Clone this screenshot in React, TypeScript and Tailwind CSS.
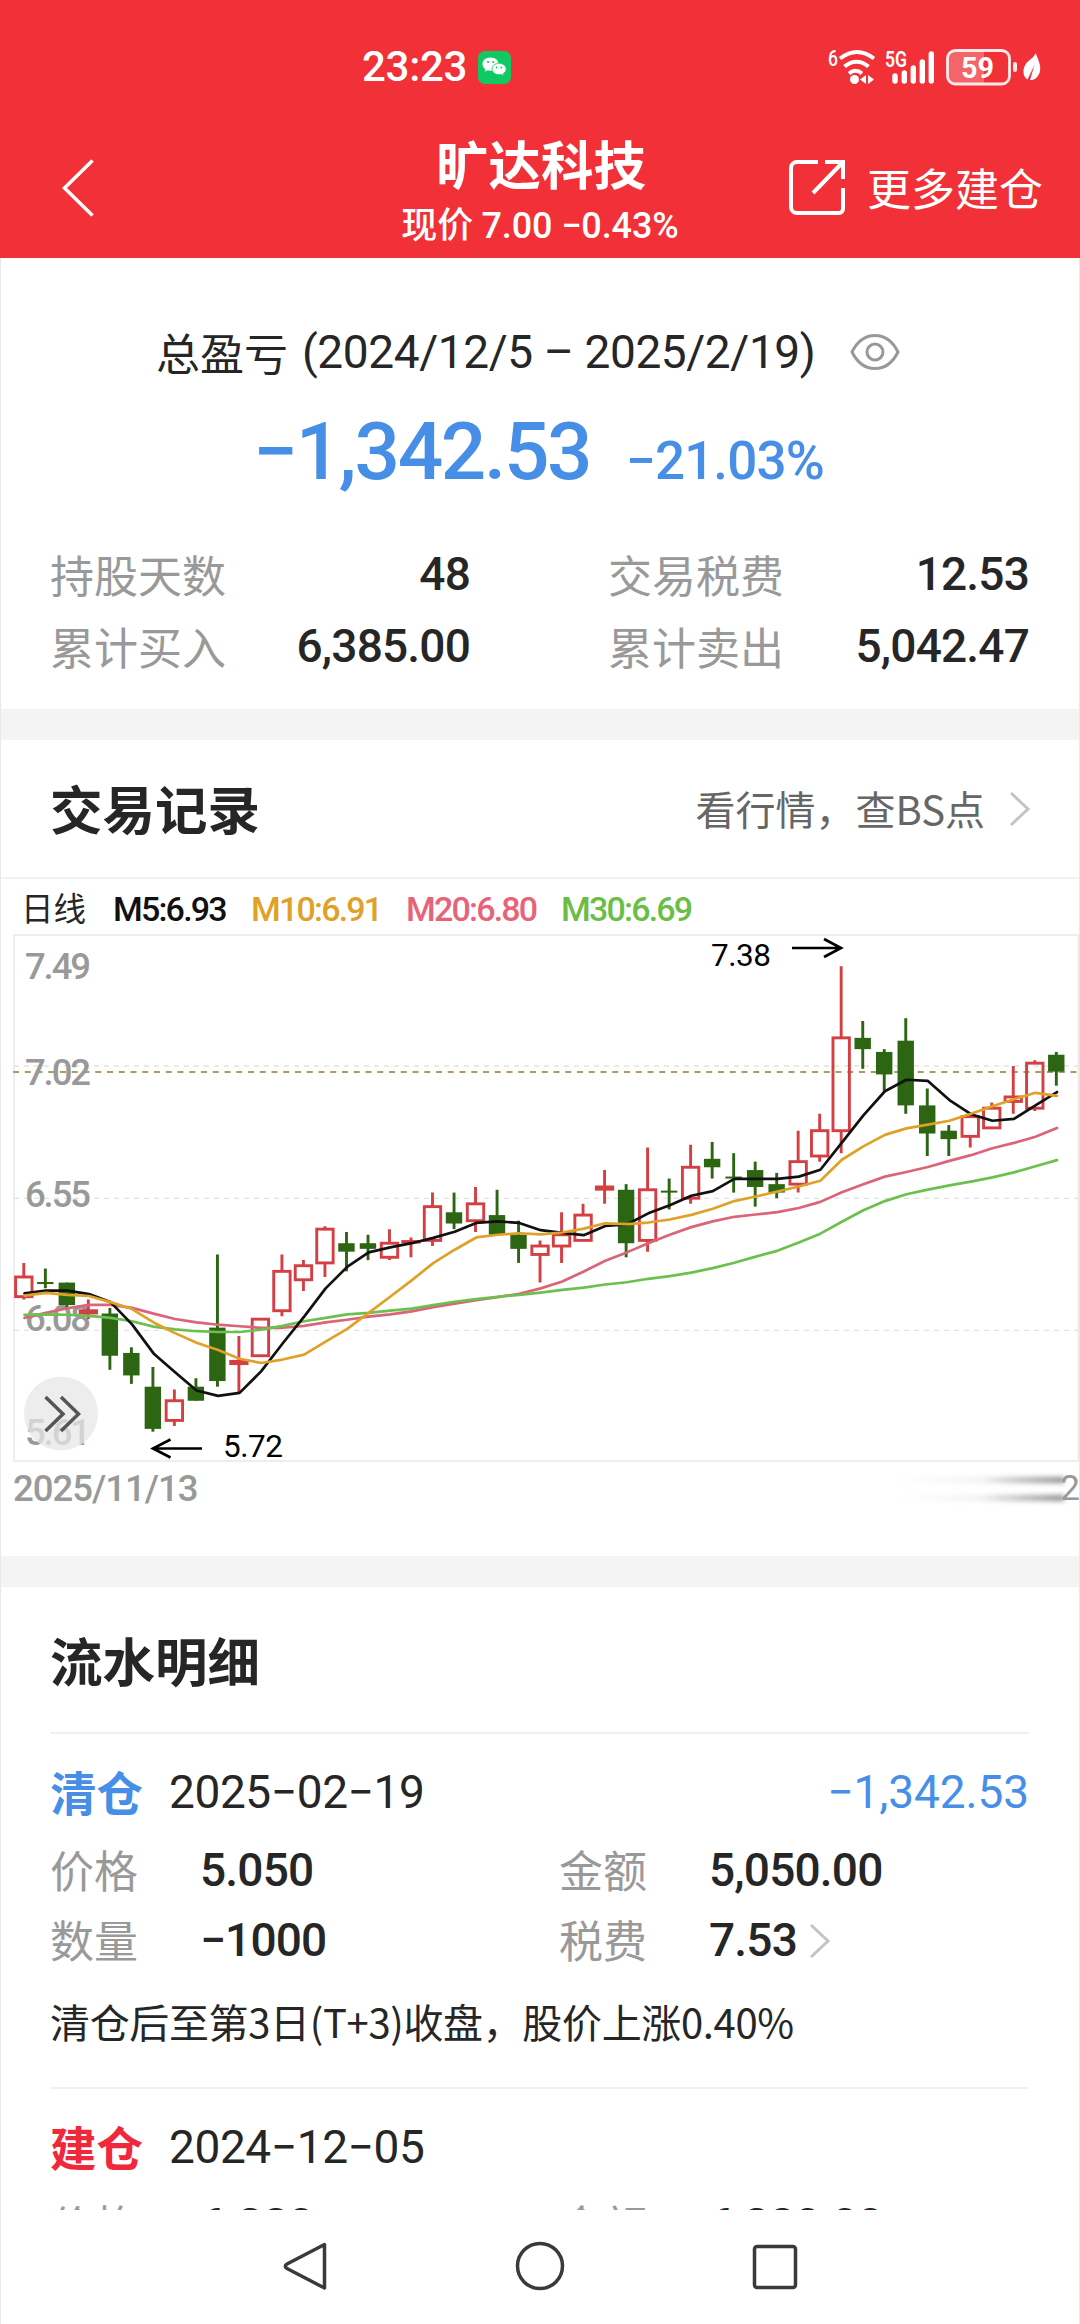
import React from 'react';

type Candle = [kind: 'up' | 'down', high: number, top: number, bottom: number, low: number];

const CANDLES: Candle[] = [
  ['up', 6.32, 6.27, 6.2, 6.19],
  ['down', 6.3, 6.252, 6.25, 6.23],
  ['down', 6.25, 6.25, 6.17, 6.16],
  ['up', 6.19, 6.15, 6.142, 6.12],
  ['down', 6.16, 6.14, 5.99, 5.94],
  ['down', 6.02, 6.0, 5.92, 5.89],
  ['down', 5.95, 5.88, 5.73, 5.72],
  ['up', 5.87, 5.83, 5.76, 5.74],
  ['down', 5.91, 5.88, 5.83, 5.83],
  ['down', 6.35, 6.09, 5.9, 5.88],
  ['up', 6.06, 5.97, 5.962, 5.86],
  ['up', 6.12, 6.12, 5.99, 5.99],
  ['up', 6.35, 6.29, 6.15, 6.13],
  ['up', 6.33, 6.31, 6.26, 6.22],
  ['up', 6.45, 6.44, 6.32, 6.27],
  ['down', 6.43, 6.39, 6.36, 6.29],
  ['down', 6.42, 6.39, 6.37, 6.33],
  ['up', 6.44, 6.39, 6.34, 6.33],
  ['up', 6.41, 6.396, 6.394, 6.34],
  ['up', 6.57, 6.52, 6.4, 6.38],
  ['down', 6.57, 6.5, 6.46, 6.44],
  ['up', 6.59, 6.53, 6.47, 6.43],
  ['down', 6.58, 6.49, 6.42, 6.42],
  ['down', 6.47, 6.42, 6.37, 6.32],
  ['up', 6.4, 6.38, 6.35, 6.25],
  ['up', 6.5, 6.42, 6.38, 6.32],
  ['up', 6.53, 6.49, 6.4, 6.4],
  ['up', 6.65, 6.59, 6.582, 6.53],
  ['down', 6.6, 6.58, 6.39, 6.34],
  ['up', 6.73, 6.58, 6.4, 6.36],
  ['down', 6.62, 6.577, 6.575, 6.51],
  ['up', 6.74, 6.66, 6.55, 6.53],
  ['down', 6.75, 6.69, 6.66, 6.62],
  ['down', 6.71, 6.627, 6.625, 6.57],
  ['down', 6.68, 6.65, 6.59, 6.52],
  ['down', 6.64, 6.6, 6.57, 6.55],
  ['up', 6.79, 6.68, 6.6, 6.57],
  ['up', 6.85, 6.79, 6.7, 6.68],
  ['up', 7.375, 7.12, 6.79, 6.71],
  ['down', 7.18, 7.12, 7.08, 7.01],
  ['down', 7.08, 7.07, 6.99, 6.93],
  ['down', 7.19, 7.11, 6.88, 6.85],
  ['down', 6.94, 6.88, 6.78, 6.7],
  ['down', 6.81, 6.79, 6.76, 6.7],
  ['up', 6.85, 6.84, 6.77, 6.73],
  ['up', 6.89, 6.87, 6.8, 6.8],
  ['up', 7.02, 6.91, 6.894, 6.85],
  ['up', 7.04, 7.03, 6.87, 6.86],
  ['down', 7.07, 7.06, 7.0, 6.95],
];

// moving averages, in steps of 1/735 yuan down from 7.503
const AVERAGES = [
  {
    color: '#dc6478',
    steps: [1013, 1000, 988, 979, 979, 987, 1002, 1016, 1025, 1031, 1035, 1039, 1039, 1034, 1025, 1018, 1010, 1004, 996, 985, 976, 967, 959, 950, 936, 918, 892, 864, 842, 818, 796, 776, 761, 749, 743, 737, 726, 710, 685, 664, 644, 632, 619, 603, 588, 570, 556, 540, 517],
  },
  {
    color: '#6cc04f',
    steps: [1005, 1004, 1005, 1008, 1013, 1022, 1036, 1043, 1048, 1050, 1050, 1044, 1034, 1022, 1013, 1004, 1000, 994, 989, 980, 971, 964, 958, 953, 947, 940, 934, 926, 920, 911, 904, 895, 883, 869, 853, 838, 816, 793, 762, 732, 708, 690, 678, 667, 657, 646, 633, 617, 601],
  },
  {
    color: '#111111',
    steps: [949, 942, 942, 951, 972, 1030, 1106, 1155, 1203, 1217, 1209, 1153, 1080, 1010, 936, 880, 842, 829, 818, 804, 788, 765, 761, 765, 784, 791, 797, 773, 769, 740, 719, 694, 682, 650, 650, 650, 644, 626, 555, 484, 421, 391, 394, 444, 481, 498, 493, 458, 423],
  },
  {
    color: '#dfa127',
    steps: [955, 948, 953, 956, 972, 990, 1025, 1053, 1078, 1097, 1120, 1131, 1122, 1109, 1075, 1042, 1000, 958, 915, 870, 835, 803, 796, 792, 795, 790, 780, 766, 768, 764, 756, 744, 728, 708, 696, 683, 670, 655, 600, 565, 535, 518, 508, 498, 480, 460, 442, 425, 433],
  },
];

const xOf = (i: number) => 23.8 + i * 21.51;
const yOf = (price: number) => 136 + (7.02 - price) * 281.3;

const CJK = "font-['Noto_Sans_CJK_SC',sans-serif]";

const StatusIcons: React.FC = () => (
  <svg width="230" height="44" viewBox="820 44 230 44" fill="none" className="shrink-0">
    <text x="828" y="65" fill="#fff" fontSize="22" fontWeight="500" textLength="10" lengthAdjust="spacingAndGlyphs">6</text>
    <g stroke="#fff" strokeWidth="4">
      <path d="M840 57.5 Q857 44.5 874 57.5" />
      <path d="M844.5 65.5 Q856.5 56 868.5 65.5" />
      <path d="M849 72.5 Q855.500 67 862 72.5" />
    </g>
    <circle cx="854.5" cy="78.500" r="4.500" fill="#fff" />
    <path d="M866 74 v9 l-6 -4.500z M868 74 v9 l6 -4.500z" fill="#fff" />
    <text x="885" y="66" fill="#fff" fontSize="22" fontWeight="600" textLength="22" lengthAdjust="spacingAndGlyphs">5G</text>
    <g stroke="#fff" strokeWidth="5.4" strokeLinecap="round">
      <path d="M895 75v5M904.300 72v8M913.300 67v13M922.300 61v19M931.300 53v27" />
    </g>
    <rect x="947.500" y="49.500" width="62" height="33.500" rx="8" stroke="#fff" strokeOpacity=".9" strokeWidth="2.800" />
    <path d="M955 50.500h29v31.500h-29a6.500 6.500 0 0 1-6.500-6.500v-18.500a6.500 6.500 0 0 1 6.500-6.500z" fill="#fff" fillOpacity=".25" />
    <text x="961" y="77" fill="#fff" fontSize="30" fontWeight="700" textLength="33" lengthAdjust="spacingAndGlyphs">59</text>
    <rect x="1013" y="61" width="4" height="10" rx="2" fill="#fff" fillOpacity=".9" />
    <path d="M1035.500 52C1039 60 1041 65 1040 70C1039 76 1034 79.500 1030 79L1034.500 64L1027.500 78.500C1022 75 1022.500 67 1026.500 62C1029.500 58.500 1034 57 1035.500 52z" fill="#fff" />
  </svg>
);

const WechatIcon: React.FC = () => (
  <svg width="33" height="33" viewBox="0 0 33 33">
    <rect width="33" height="33" rx="7" fill="#0fca63" />
    <path d="M12.500 6.500c-4.600 0-8 2.800-8 6.500 0 2.200 1.100 4 2.900 5.200l-.6 2.500 2.800-1.400c.9.200 1.900.4 2.900.4 4.600 0 8-3 8-6.700s-3.400-6.500-8-6.500z" fill="#fff" />
    <path d="M21 12.300c-4 0-7 2.500-7 5.700s3 5.700 7 5.700c.9 0 1.700-.1 2.500-.3l2.400 1.300-.5-2.300c1.700-1 2.800-2.600 2.800-4.400 0-3.200-3.200-5.700-7.200-5.700z" fill="#fff" stroke="#0fca63" strokeWidth=".8" />
    <g fill="#0fca63">
      <circle cx="10" cy="11" r="1.100" />
      <circle cx="15.300" cy="11" r="1.100" />
      <circle cx="18.700" cy="16.500" r=".9" />
      <circle cx="23.300" cy="16.500" r=".9" />
    </g>
  </svg>
);

const Header: React.FC = () => (
  <header className="h-[258px] bg-[#f13037] text-white">
    <div className="h-[134px] flex items-center justify-between pl-[362px] pr-[30px]">
      <div className="flex items-center gap-[11px]">
        <span className="text-[42px] leading-[50px] font-medium tracking-[-0.3px]">23:23</span>
        <WechatIcon />
      </div>
      <StatusIcons />
    </div>
    <div className="h-[124px] grid grid-cols-[402px_276px_1fr]">
      <button className="pl-[60px] pt-[25px] flex items-start">
        <svg width="36" height="58" viewBox="0 0 36 58" fill="none" stroke="#fff" strokeWidth="3.500">
          <path d="M32.500 1.500L4.500 29L32.500 56.500" />
        </svg>
      </button>
      <div className="flex flex-col items-center whitespace-nowrap">
        <h1 className={`${CJK} text-[52.500px] leading-[60px] font-bold -mt-[2px] mb-[2px] pl-[2px]`}>旷达科技</h1>
        <p className={`${CJK} text-[36px] leading-[56px] font-medium`}>
          现价 <span className="font-['Roboto'] tracking-[-0.1px]">7.00 −0.43%</span>
        </p>
      </div>
      <div className="pt-[25px] pl-[109px] flex items-start gap-[20px]">
        <svg width="60" height="58" viewBox="0 0 60 58" fill="none" stroke="#fff" strokeWidth="4" className="shrink-0">
          <path d="M31 3H10a6 6 0 0 0-6 6v39a6 6 0 0 0 6 6h42a4 4 0 0 0 4-4V29" />
          <path d="M38 3h18v17M56 3L26 34" />
        </svg>
        <span className={`${CJK} text-[44px] leading-[56px] whitespace-nowrap`}>更多建仓</span>
      </div>
    </div>
  </header>
);

const Stat: React.FC<{ label: string; value: string; width: string }> = ({ label, value, width }) => (
  <div className={`${width} h-[72px] flex items-center justify-between`}>
    <span className={`${CJK} text-[#999] text-[44px] leading-[60px] -ml-px`}>{label}</span>
    <span className="text-[46px] leading-[60px] font-medium tracking-[-0.8px]">{value}</span>
  </div>
);

const Summary: React.FC = () => (
  <section className="h-[451px] pt-[58px]">
    <div className="h-[72px] flex items-center pl-[155px] whitespace-nowrap">
      <span className={`${CJK} text-[44px] leading-[60px] w-[146px]`}>总盈亏</span>
      <span className="text-[46px] leading-[60px] w-[548px] tracking-[-0.4px]">(2024/12/5 – 2025/2/19)</span>
      <svg width="50" height="38" viewBox="0 0 50 38" fill="none" stroke="#999" strokeWidth="3">
        <path d="M2 19C8 7 16 2.500 25 2.500S42 7 48 19C42 31 34 35.500 25 35.500S8 31 2 19z" />
        <circle cx="25" cy="19" r="8" />
      </svg>
    </div>
    <div className="h-[96px] mt-[16px] flex items-baseline pl-[252px] text-[#478fe6] whitespace-nowrap">
      <span className="text-[80px] leading-[96px] w-[373px] font-medium tracking-[-2.300px]">−1,342.53</span>
      <span className="text-[53px] leading-[60px] font-medium tracking-[-0.900px]">−21.03%</span>
    </div>
    <div className="mt-[38px] pl-[50px] pr-[50px] flex flex-wrap justify-between">
      <Stat label="持股天数" value="48" width="w-[419px]" />
      <Stat label="交易税费" value="12.53" width="w-[420px]" />
      <Stat label="累计买入" value="6,385.00" width="w-[419px]" />
      <Stat label="累计卖出" value="5,042.47" width="w-[420px]" />
    </div>
  </section>
);

const Chevron: React.FC<{ className?: string }> = ({ className }) => (
  <svg width="22" height="36" viewBox="0 0 22 36" fill="none" stroke="#c4c4c4" strokeWidth="3" className={className}>
    <path d="M2 2L19 18L2 34" />
  </svg>
);

const CandleChart: React.FC = () => (
  <svg width="1078" height="535" viewBox="1 0 1078 535" fill="none" className="block">
    <rect x="14" y="5" width="1064.500" height="526" stroke="#e9e9e9" strokeWidth="1.500" />
    <g stroke="#e2e2e2" strokeWidth="1.300" strokeDasharray="5 5">
      <path d="M14 136H1078" />
      <path d="M14 268.300H1078" />
      <path d="M14 400.300H1078" />
    </g>
    <path d="M13 142H1078" stroke="#b09a60" strokeWidth="1.800" strokeDasharray="6 5.750" />
    <g fill="#999" fontSize="36.500" fontWeight="500">
      <text x="25" y="49" textLength="66">7.49</text>
      <text x="25" y="155" textLength="66">7.02</text>
      <text x="25" y="277" textLength="66">6.55</text>
      <text x="25" y="400.500" textLength="66">6.08</text>
      <text x="25" y="515" textLength="66">5.61</text>
    </g>
    {CANDLES.map(([kind, high, top, bottom, low], i) => {
      const x = xOf(i);
      if (kind === 'down') {
        return (
          <g key={i} fill="#2c6612">
            <rect x={x - 1.4} y={yOf(high)} width="2.900" height={yOf(low) - yOf(high)} />
            <rect x={x - 8.2} y={yOf(top)} width="16.400" height={Math.max(2, yOf(bottom) - yOf(top))} />
          </g>
        );
      }
      return (
        <g key={i} stroke="#d43f43" strokeWidth="2.900">
          <path d={`M${x} ${yOf(high)}V${yOf(top)}M${x} ${yOf(bottom)}V${yOf(low)}`} />
          <rect x={x - 8.2} y={yOf(top)} width="16.400" height={yOf(bottom) - yOf(top)} />
        </g>
      );
    })}
    {AVERAGES.map(({ color, steps }) => (
      <polyline
        key={color}
        points={steps.map((s, i) => `${xOf(i) + 0.7},${yOf(7.503 - s / 735)}`).join(' ')}
        stroke={color}
        strokeWidth="2.700"
        strokeLinejoin="round"
        strokeLinecap="round"
      />
    ))}
    <g stroke="#000" strokeWidth="2.700">
      <path d="M792 18H841M824 9L841 18L824 27" />
      <path d="M202 518.500H153M170.500 509.500L153 518.500L170.500 527.500" />
    </g>
    <g fill="#000" fontSize="31.500">
      <text x="711" y="36" textLength="60">7.38</text>
      <text x="223" y="527" textLength="60">5.72</text>
    </g>
    <circle cx="61" cy="483.500" r="37" fill="#e7e7e7" fillOpacity=".75" />
    <path d="M45.500 467L63 484L45.500 501M61 467L78.500 484L61 501" stroke="#555" strokeWidth="3.500" />
  </svg>
);

const TradeRecord: React.FC = () => (
  <section className="h-[816px]">
    <div className="h-[139px] border-b-2 border-[#f2f2f2] flex items-center justify-between pl-[49px] pr-[48px]">
      <h2 className={`${CJK} text-[52.500px] leading-[60px] -mt-[4px] font-bold`}>交易记录</h2>
      <a className="flex items-center text-[#666]">
        <span className={`${CJK} text-[40px] leading-[60px] -mt-[2px]`}>看行情，查BS点</span>
        <Chevron className="ml-[24px]" />
      </a>
    </div>
    <div className="h-[51px] pt-[9px] flex items-center pl-[20px] text-[34px] leading-[42px] font-medium whitespace-nowrap tracking-[-1.800px]">
      <span className={`${CJK} w-[92px] text-[32.500px] -mt-[4px] font-normal tracking-normal`}>日线</span>
      <span className="w-[138px] text-[#111]">M5:6.93</span>
      <span className="w-[155px] text-[#dfa127]">M10:6.91</span>
      <span className="w-[155px] text-[#e8637a]">M20:6.80</span>
      <span className="text-[#6abd45]">M30:6.69</span>
    </div>
    <CandleChart />
    <div className="h-[47px] pt-[1px] flex items-center justify-between pl-[12px] text-[36.500px] leading-[44px] text-[#999] font-medium">
      <span className="tracking-[-1px]">2025/11/13</span>
      <span className="flex items-center">
        <span className="w-[167px] h-[24px] flex flex-col justify-between">
          <span className="h-[6px] bg-linear-to-r from-transparent via-[#f2f2f2] to-[#8c8c8c] blur-[2.500px]" />
          <span className="h-[6px] bg-linear-to-r from-transparent via-[#f2f2f2] to-[#8c8c8c] blur-[2.500px]" />
        </span>
        <span className="font-normal text-[35px] tracking-[-1px] relative -ml-[4px]">2</span>
      </span>
    </div>
  </section>
);

interface Entry {
  kind: string;
  color: string;
  date: string;
  profit?: string;
  price: string;
  amount: string;
  count?: string;
  fee?: string;
  note?: string;
}

const ENTRIES: Entry[] = [
  {
    kind: '清仓',
    color: 'text-[#478fe6]',
    date: '2025−02−19',
    profit: '−1,342.53',
    price: '5.050',
    amount: '5,050.00',
    count: '−1000',
    fee: '7.53',
    note: '清仓后至第3日(T+3)收盘，股价上涨0.40%',
  },
  {
    kind: '建仓',
    color: 'text-[#f0283c]',
    date: '2024−12−05',
    price: '6.380',
    amount: '6,380.00',
  },
];

const Field: React.FC<{ label: string; value: string; width: string; arrow?: boolean }> = ({ label, value, width, arrow }) => (
  <div className={`${width} h-[70px] flex items-center`}>
    <span className={`${CJK} w-[150px] text-[#999] text-[44px] leading-[60px] -mt-[2px]`}>{label}</span>
    <span className="text-[46px] leading-[60px] font-medium tracking-[-0.800px]">{value}</span>
    {arrow && <Chevron className="ml-[12px] mt-[2px]" />}
  </div>
);

const EntryItem: React.FC<{ entry: Entry }> = ({ entry }) => (
  <li className="shrink-0 border-t-2 border-[#f0f0f0] pt-[22px]">
    <div className="h-[72px] flex items-center">
      <span className={`${CJK} ${entry.color} w-[119px] text-[46.500px] leading-[60px] -mt-[2px] font-bold`}>{entry.kind}</span>
      <span className="text-[46px] leading-[60px] tracking-[-0.4px]">{entry.date}</span>
      {entry.profit && <span className={`${entry.color} ml-auto text-[46px] leading-[60px] tracking-[-0.1px]`}>{entry.profit}</span>}
    </div>
    <div className="flex mt-[7px]">
      <Field label="价格" value={entry.price} width="w-[509px]" />
      <Field label="金额" value={entry.amount} width="w-[469px]" />
    </div>
    {entry.count && entry.fee && (
      <div className="flex">
        <Field label="数量" value={entry.count} width="w-[509px]" />
        <Field label="税费" value={entry.fee} width="w-[469px]" arrow />
      </div>
    )}
    {entry.note && <p className={`${CJK} h-[66px] mt-[13px] mb-[33px] text-[40px] leading-[66px] whitespace-nowrap tracking-[-0.350px]`}>{entry.note}</p>}
  </li>
);

const Details: React.FC = () => (
  <section className="h-[623px] overflow-hidden pl-[49px] pr-[50px] flex flex-col">
    <h2 className={`${CJK} shrink-0 h-[145px] leading-[145px] text-[52.500px] font-bold`}>流水明细</h2>
    <ul>
      {ENTRIES.map((entry) => (
        <EntryItem key={entry.date} entry={entry} />
      ))}
    </ul>
  </section>
);

const SystemNav: React.FC = () => (
  <nav className="h-[114px] flex items-start justify-center gap-[184px] pt-[31px]">
    <svg width="50" height="50" viewBox="0 0 50 50" fill="none" stroke="#3a3a3a" strokeWidth="3.500" strokeLinejoin="round">
      <path d="M43.500 3.500V47L6 27.500Q2.500 25.300 6 23z" />
    </svg>
    <svg width="50" height="50" viewBox="0 0 50 50" fill="none" stroke="#3a3a3a" strokeWidth="3.500">
      <circle cx="25" cy="25" r="22.500" />
    </svg>
    <svg width="50" height="50" viewBox="0 0 50 50" fill="none" stroke="#3a3a3a" strokeWidth="3.500">
      <rect x="5.500" y="5.500" width="41" height="41" rx="2.500" />
    </svg>
  </nav>
);

const App: React.FC = () => {
  return (
    <div className="w-[1080px] h-[2324px] overflow-hidden bg-white text-[#262626] font-['Roboto','Noto_Sans_CJK_SC',sans-serif]">
      <Header />
      <main className="border-x border-[#e8e8e8]">
        <Summary />
        <div className="h-[31px] bg-[#f4f4f4]" />
        <TradeRecord />
        <div className="h-[31px] bg-[#f4f4f4]" />
        <Details />
        <SystemNav />
      </main>
    </div>
  );
};

export default App;
